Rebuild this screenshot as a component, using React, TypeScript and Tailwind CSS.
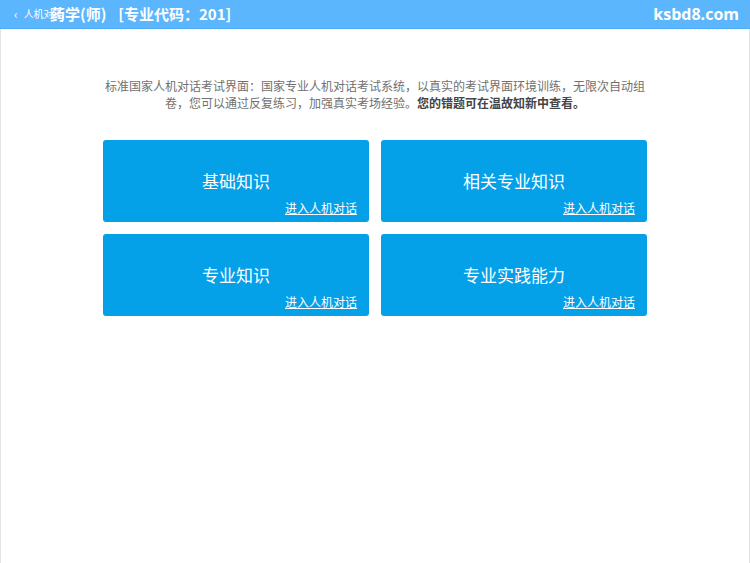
const cards = ["基础知识", "相关专业知识", "专业知识", "专业实践能力"];

export default function App() {
  return (
    <div
      className="flex h-[563px] w-[750px] flex-col bg-white"
      style={{ fontFamily: '"Noto Sans CJK SC", "Liberation Sans", sans-serif' }}
    >
      <header className="relative flex h-[29px] shrink-0 items-center border-b border-[#4fa9f3] bg-[#5cb6fd] text-white">
        <span className="absolute left-[14px] top-[8px] flex items-center gap-[6px] text-[10px] leading-[12px]">
          <span className="text-[12px]">‹</span>
          人机对话
        </span>
        <h1 className="relative ml-[50px] flex gap-[12px] text-[15px] font-bold leading-[20px]">
          <span>药学(师)</span>
          <span>[专业代码：201]</span>
        </h1>
        <span
          className="ml-auto mr-[11px] text-[16px] font-bold leading-[20px]"
          style={{ fontFamily: '"Open Sans", "Liberation Sans", sans-serif' }}
        >
          ksbd8.com
        </span>
      </header>
      <main className="flex flex-1 flex-col items-center border-x border-[#e3e3e3] pt-[48px]">
        <p className="w-[540px] text-center text-[12px] leading-[17px] text-[#707070]">
          标准国家人机对话考试界面：国家专业人机对话考试系统，以真实的考试界面环境训练，无限次自动组卷，您可以通过反复练习，加强真实考场经验。
          <b className="text-[#444]">您的错题可在温故知新中查看。</b>
        </p>
        <div className="mt-[29px] grid w-[544px] grid-cols-2 gap-[12px]">
          {cards.map((c) => (
            <div
              key={c}
              className="relative flex h-[82px] items-center justify-center rounded-[3px] bg-[#04a0e8] text-white"
            >
              <span className="text-[17px] leading-[22px]">{c}</span>
              <a className="absolute bottom-[7px] right-[12px] text-[12px] leading-[15px] underline">
                进入人机对话
              </a>
            </div>
          ))}
        </div>
      </main>
    </div>
  );
}
